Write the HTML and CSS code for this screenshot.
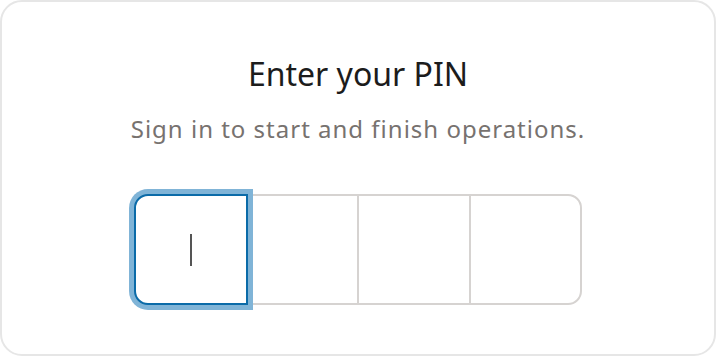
FILE: index.html
```html
<!DOCTYPE html>
<html lang="en">

<head>
    <meta charset="UTF-8">
    <meta name="viewport" content="width=device-width, initial-scale=1.0">
    <title>Enter your PIN</title>
    <link rel="stylesheet" href="styles.css">
</head>

<body>
    <div class="card">
        <h2 class="title">Enter your PIN</h2>
        <p class="subtitle">Sign in to start and finish operations.</p>

        <div class="pin-group">
            <div class="pin-cell pin-cell-focus"><span class="caret"></span></div>
            <div class="pin-cell"></div>
            <div class="pin-cell"></div>
            <div class="pin-cell"></div>
        </div>
    </div>
</body>

</html>
```

FILE: styles.css
```css
/* Reset */
* {
    margin: 0;
    padding: 0;
    box-sizing: border-box;
}

body {
    font-family: 'Noto Sans', 'Open Sans', sans-serif;
    background-color: #fff;
}

/* Card */
.card {
    width: 716px;
    height: 356px;
    border: 2px solid #e6e6e6;
    border-radius: 22px;
    background-color: #fff;
    display: flex;
    flex-direction: column;
    align-items: center;
    padding-top: 50px;
}

.title {
    font-size: 32px;
    font-weight: 400;
    line-height: 44px;
    color: #1c1c1c;
}

.subtitle {
    margin-top: 18px;
    font-size: 24px;
    line-height: 30px;
    color: #77726f;
    letter-spacing: 1px;
}

/* PIN boxes */
.pin-group {
    display: flex;
    margin-top: 50px;
}

.pin-cell {
    width: 113.5px;
    height: 111px;
    border: 2px solid #d6d3d1;
    background-color: #fff;
    display: flex;
    align-items: center;
    justify-content: center;
}

.pin-cell + .pin-cell {
    margin-left: -2px;
}

.pin-cell:first-child {
    border-radius: 14px 0 0 14px;
}

.pin-cell:last-child {
    border-radius: 0 14px 14px 0;
}

.pin-cell-focus {
    position: relative;
    z-index: 1;
    border-color: #0b6ba8;
    box-shadow: 0 0 0 5px #80b4d7;
}

.caret {
    width: 2px;
    height: 32px;
    background-color: #555;
}
```
